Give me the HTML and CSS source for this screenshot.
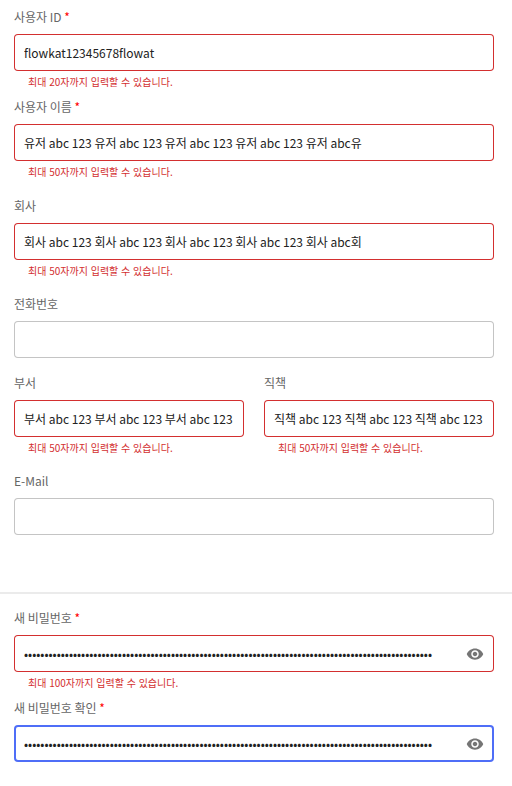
FILE: index.html
```html
<!DOCTYPE html>
<html lang="en">
<head>
<meta charset="utf-8">
<meta name="viewport" content="width=device-width, initial-scale=1">
<title>사용자 정보</title>
<link rel="stylesheet" href="styles.css">
</head>
<body>
<form class="form">
  <div class="section">
    <div class="group group-compact">
      <div class="field field-error">
        <label class="label" for="user-id">사용자 ID <span class="required">*</span></label>
        <div class="control"><input class="input" id="user-id" type="text" value="flowkat12345678flowat"></div>
        <p class="helper" lang="ko">최대 20자까지 입력할 수 있습니다.</p>
      </div>
      <div class="field field-error">
        <label class="label" for="user-name">사용자 이름 <span class="required">*</span></label>
        <div class="control"><input class="input" id="user-name" type="text" value="유저 abc 123 유저 abc 123 유저 abc 123 유저 abc 123 유저 abc유"></div>
        <p class="helper" lang="ko">최대 50자까지 입력할 수 있습니다.</p>
      </div>
    </div>
    <div class="group group-details">
      <div class="field field-error">
        <label class="label" for="company">회사</label>
        <div class="control"><input class="input" id="company" type="text" value="회사 abc 123 회사 abc 123 회사 abc 123 회사 abc 123 회사 abc회"></div>
        <p class="helper" lang="ko">최대 50자까지 입력할 수 있습니다.</p>
      </div>
      <div class="field">
        <label class="label" for="phone">전화번호</label>
        <div class="control"><input class="input" id="phone" type="tel"></div>
      </div>
      <div class="row">
        <div class="field field-error">
          <label class="label" for="department">부서</label>
          <div class="control"><input class="input" id="department" type="text" value="부서 abc 123 부서 abc 123 부서 abc 123"></div>
          <p class="helper" lang="ko">최대 50자까지 입력할 수 있습니다.</p>
        </div>
        <div class="field field-error">
          <label class="label" for="position">직책</label>
          <div class="control"><input class="input" id="position" type="text" value="직책 abc 123 직책 abc 123 직책 abc 123"></div>
          <p class="helper" lang="ko">최대 50자까지 입력할 수 있습니다.</p>
        </div>
      </div>
      <div class="field">
        <label class="label" for="email">E-Mail</label>
        <div class="control"><input class="input" id="email" type="email"></div>
      </div>
    </div>
  </div>
  <div class="section section-password">
    <div class="group group-compact">
      <div class="field field-error">
        <label class="label" for="password">새 비밀번호 <span class="required">*</span></label>
        <div class="control">
          <input class="input" id="password" type="password" value="1234567890123456789012345678901234567890123456789012345678901234567890123456789012345678901234567890">
          <button class="toggle" type="button" aria-label="비밀번호 표시">
            <svg class="icon" viewBox="0 0 24 24" aria-hidden="true"><path d="M12 4.5C7 4.5 2.73 7.61 1 12c1.73 4.39 6 7.5 11 7.5s9.27-3.11 11-7.5c-1.73-4.39-6-7.5-11-7.5zM12 17c-2.76 0-5-2.24-5-5s2.24-5 5-5 5 2.24 5 5-2.24 5-5 5zm0-8c-1.66 0-3 1.34-3 3s1.34 3 3 3 3-1.34 3-3-1.34-3-3-3z"/></svg>
          </button>
        </div>
        <p class="helper" lang="ko">최대 100자까지 입력할 수 있습니다.</p>
      </div>
      <div class="field field-active">
        <label class="label" for="password-confirm">새 비밀번호 확인 <span class="required">*</span></label>
        <div class="control">
          <input class="input" id="password-confirm" type="password" value="1234567890123456789012345678901234567890123456789012345678901234567890123456789012345678901234567890">
          <button class="toggle" type="button" aria-label="비밀번호 확인 표시">
            <svg class="icon" viewBox="0 0 24 24" aria-hidden="true"><path d="M12 4.5C7 4.5 2.73 7.61 1 12c1.73 4.39 6 7.5 11 7.5s9.27-3.11 11-7.5c-1.73-4.39-6-7.5-11-7.5zM12 17c-2.76 0-5-2.24-5-5s2.24-5 5-5 5 2.24 5 5-2.24 5-5 5zm0-8c-1.66 0-3 1.34-3 3s1.34 3 3 3 3-1.34 3-3-1.34-3-3-3z"/></svg>
          </button>
        </div>
      </div>
    </div>
  </div>
</form>
</body>
</html>
```
FILE: styles.css
```css
* {
  box-sizing: border-box;
}

body {
  margin: 0;
  background: #fff;
  color: #212121;
  font-family: "Noto Sans CJK KR", sans-serif;
  font-size: 12px;
}

.section {
  padding: 8px 18px 57px 14px;
}

.section-password {
  border-top: 2px solid #ebebeb;
  padding-top: 15px;
  padding-bottom: 16px;
}

.group {
  display: flex;
  flex-direction: column;
  gap: 16px;
}

.group-compact {
  gap: 8px;
}

.group-details {
  margin-top: 17px;
}

.row {
  display: grid;
  grid-template-columns: 1fr 1fr;
  gap: 20px;
}

.field {
  min-width: 0;
}

.label {
  display: block;
  margin-bottom: 8px;
  color: #666;
  line-height: 18px;
}

.required {
  color: #f00;
}

.control {
  display: flex;
  align-items: center;
  height: 37px;
  padding: 0 10px;
  border-radius: 4px;
  box-shadow: inset 0 0 0 1px #c4c4c4;
}

.field-error .control {
  box-shadow: inset 0 0 0 1px #d32f2f;
}

.field-active .control {
  box-shadow: inset 0 0 0 2px #4f6ef7;
}

.input {
  flex: 1;
  min-width: 0;
  height: 100%;
  padding: 0;
  border: 0;
  outline: 0;
  background: none;
  color: inherit;
  font: inherit;
}

.toggle {
  display: flex;
  padding: 0;
  border: 0;
  background: none;
  color: #757575;
  cursor: pointer;
}

.icon {
  width: 18px;
  height: 18px;
  fill: currentColor;
}

.helper {
  margin: 3px 14px 0;
  color: #d32f2f;
  font-size: 10px;
  line-height: 16px;
}
```
